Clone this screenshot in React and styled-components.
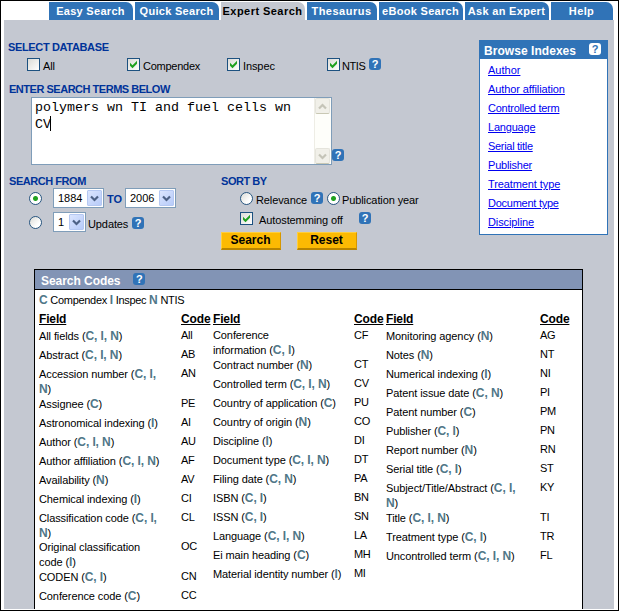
import React from "react";
import styled, { createGlobalStyle, css } from "styled-components";

const BLUE = "#3073b7";
const NAVY = "#003399";
const GREY = "#c4c8d1";

const Global = createGlobalStyle`
  * { box-sizing: border-box; }
  body { margin: 0; background: #fff; overflow: hidden; }
`;

const Frame = styled.div`
  width: 619px;
  height: 611px;
  border: 1px solid #000;
  padding: 1px 4px 1px 3px;
  background: #fff;
  color: #000;
  font: 11px/15px "Liberation Sans", Arial, sans-serif;
  letter-spacing: -0.1px;
  white-space: nowrap;
  display: flex;
  flex-direction: column;
  overflow: hidden;
`;

const Tabs = styled.nav`
  display: flex;
  gap: 2px;
  height: 18px;
  flex: none;
  padding-left: 45px;
`;

const Tab = styled.a`
  width: ${(p) => p.$w}px;
  height: 18px;
  line-height: 19px;
  text-align: center;
  font-size: 11px;
  font-weight: bold;
  letter-spacing: ${(p) => p.$ls ?? 0}px;
  padding-right: ${(p) => p.$pr ?? 1}px;
  border-top-right-radius: 7px;
  background: ${(p) => (p.$active ? GREY : BLUE)};
  color: ${(p) => (p.$active ? "#000" : "#fff")};
`;

const Content = styled.main`
  flex: 1;
  min-height: 0;
  width: 610px;
  background: ${GREY};
  padding-top: 20px;
`;

const Upper = styled.section`
  display: flex;
  height: 229px;
`;

const Form = styled.form`
  width: 475px;
`;

const Label = styled.h2`
  margin: 0;
  padding-left: ${(p) => p.$indent ?? 0}px;
  font-size: 11px;
  line-height: 14px;
  height: 14px;
  font-weight: bold;
  color: ${NAVY};
  letter-spacing: ${(p) => p.$ls ?? 0}px;
`;

const Databases = styled.div`
  display: flex;
  margin-top: 4px;
  padding-left: 23px;
  height: 14px;
`;

const Option = styled.label`
  display: flex;
  gap: ${(p) => p.$gap ?? 3}px;
  width: ${(p) => (p.$w ? p.$w + "px" : "auto")};
  height: 13px;
  letter-spacing: ${(p) => p.$ls ?? -0.1}px;
  line-height: 17px;
`;

const Box = styled.span`
  flex: none;
  width: 13px;
  height: 13px;
  border: 1px solid #1c5180;
  background: linear-gradient(135deg, #dcdcd7, #fff);
  svg { display: block; }
`;

const Dot = styled.span`
  flex: none;
  width: 13px;
  height: 13px;
  border: 1px solid #285680;
  border-radius: 50%;
  background: ${(p) =>
    p.$on
      ? "radial-gradient(circle, #21a121 0 2px, #fff 3px)"
      : "linear-gradient(135deg, #dcdcd7, #fff 70%)"};
`;

const HelpBadge = styled.span`
  flex: none;
  display: block;
  width: 12px;
  height: 12px;
  border-radius: 3px;
  background: ${(p) => (p.$light ? "#fff" : BLUE)};
  color: ${(p) => (p.$light ? BLUE : "#fff")};
  font: bold 11px/12px "Liberation Sans", Arial, sans-serif;
  text-align: center;
  letter-spacing: 0;
  margin: ${(p) => p.$m ?? "0"};
`;

const Terms = styled.div`
  display: flex;
  align-items: flex-end;
  margin: 1px 0 0 27px;
  height: 68px;
`;

const TextArea = styled.div`
  display: flex;
  width: 301px;
  height: 68px;
  border: 1px solid #7f9db9;
  background: #fff;
`;

const Typed = styled.div`
  flex: 1;
  padding: 2px 0 0 3px;
  font: 13.33px/16px "Liberation Mono", "Courier New", monospace;
  letter-spacing: 0;
`;

const Caret = styled.span`
  display: inline-block;
  width: 1px;
  height: 15px;
  margin-left: -1px;
  background: #000;
  vertical-align: -3px;
`;

const Scrollbar = styled.div`
  width: 17px;
  background: #fefefa;
  border-left: 1px solid #eeede5;
  display: flex;
  flex-direction: column;
  justify-content: space-between;
`;

const ScrollButton = styled.span`
  display: grid;
  place-items: center;
  width: 15px;
  height: 16px;
  border: 1px solid #e5e4dc;
  border-bottom-color: #c9c8b4;
  border-radius: 2px;
  background: #f1f0e9;
`;

const Criteria = styled.div`
  display: flex;
  margin-top: 9px;
`;

const Dates = styled.div`
  width: 217px;
`;

const Sorting = styled.div`
  flex: 1;
`;

const Row = styled.div`
  display: flex;
  align-items: ${(p) => p.$align ?? "flex-start"};
  height: ${(p) => p.$h}px;
  padding-left: ${(p) => p.$pl ?? 0}px;
  margin-top: ${(p) => p.$mt ?? 0}px;
`;

const Select = styled.span`
  display: flex;
  align-items: center;
  justify-content: space-between;
  width: ${(p) => p.$w}px;
  height: 20px;
  padding: 1px 1px 1px 4px;
  margin-left: ${(p) => p.$ml ?? 0}px;
  border: 1px solid #7f9db9;
  background: #fff;
  letter-spacing: 0;
`;

const SelectButton = styled.span`
  display: grid;
  place-items: center;
  width: 15px;
  height: 16px;
  border-radius: 1px;
  border: 1px solid #b5c8f2;
  background: linear-gradient(135deg, #dbe5fe, #b7cbf9);
`;

const Between = styled.b`
  color: ${NAVY};
  width: 21px;
  text-align: center;
  padding-top: 4px;
`;

const Caption = styled.span`
  width: 44px;
  margin-left: 2px;
  padding-top: 5px;
`;

const Action = styled.button`
  width: 60px;
  height: 18px;
  padding: 0 1px 1px 0;
  margin: 0 16px 0 0;
  border: 1px solid;
  border-color: #ffce3c #d69700 #b98500 #ffce3c;
  border-bottom-width: 2px;
  background: #fcba03;
  color: #000;
  font: bold 12px/15px "Liberation Sans", Arial, sans-serif;
`;

const Browse = styled.aside`
  width: 129px;
  height: 195px;
  border: 1px solid ${BLUE};
  background: #fff;
`;

const BrowseTitle = styled.h2`
  display: flex;
  justify-content: space-between;
  margin: 0;
  height: 18px;
  padding: 0 6px 0 4px;
  background: ${BLUE};
  color: #fff;
  font-size: 12px;
  line-height: 20px;
  letter-spacing: 0.05px;
`;

const Links = styled.div`
  display: flex;
  flex-direction: column;
  align-items: flex-start;
  padding: 2px 0 0 8px;
`;

const Link = styled.a`
  height: 19px;
  line-height: 19px;
  color: #0000f0;
  text-decoration: underline;
  letter-spacing: ${(p) => p.$ls ?? -0.1}px;
`;

const Codes = styled.section`
  width: 549px;
  height: 340px;
  margin-left: 30px;
  border: 1px solid #000;
  border-bottom: 0;
  background: #fff;
`;

const CodesTitle = styled.h2`
  display: flex;
  margin: 0;
  height: 20px;
  padding-left: 6px;
  border-bottom: 1px solid #000;
  background: #8294b5;
  color: #fff;
  font-size: 12px;
  line-height: 22px;
  letter-spacing: -0.05px;
`;

const Legend = styled.div`
  padding: 3px 0 0 4px;
  height: 20px;
  letter-spacing: -0.3px;
`;

const Mark = styled.b`
  color: #507788;
  font-size: 12px;
  line-height: 14px;
  letter-spacing: -0.1px;
`;

const Groups = styled.div`
  display: grid;
  grid-template-columns: 174px 173px 1fr;
  padding-left: 4px;
`;

const line = css`
  display: grid;
  grid-template-columns: ${(p) => p.$fw}px 1fr;
`;

const Heads = styled.div`
  ${line}
  height: 18px;
  font-size: 12px;
  line-height: 18px;
  font-weight: bold;
  text-decoration: underline;
  letter-spacing: -0.15px;
`;

const Entry = styled.div`
  ${line}
  height: ${(p) => p.$h}px;
`;

const Field = styled.span`
  padding-top: ${(p) => (p.$raised ? 0 : 1)}px;
`;

const FieldLine = styled.span`
  display: block;
  height: 15px;
  line-height: 15px;
`;

const Code = styled.span`
  letter-spacing: -0.3px;
`;

const Chevron = ({ color, up }) => (
  <svg width="9" height="7" viewBox="0 0 9 7">
    <path d={up ? "M1 5.5 4.5 2 8 5.5" : "M1 1.5 4.5 5 8 1.5"} fill="none" stroke={color} strokeWidth="2.2" />
  </svg>
);

const Check = ({ on }) => (
  <Box>
    {on && (
      <svg width="11" height="11" viewBox="0 0 11 11">
        <path d="M2 3.8v3L4.5 9.2 9 4.7v-3L4.5 6.2Z" fill="#21a121" />
      </svg>
    )}
  </Box>
);

const Help = (props) => <HelpBadge {...props}>?</HelpBadge>;

const tabs = [
  ["Easy Search", 84, 0.3],
  ["Quick Search", 84, 0.3],
  ["Expert Search", 84, 0.45],
  ["Thesaurus", 70, 0.5],
  ["eBook Search", 84, 0.3],
  ["Ask an Expert", 84, 0.3],
  ["Help", 62, 0.4],
];

const links = [
  ["Author", 0],
  ["Author affiliation", -0.1],
  ["Controlled term", -0.25],
  ["Language", -0.2],
  ["Serial title", -0.3],
  ["Publisher", -0.2],
  ["Treatment type", -0.1],
  ["Document type", -0.25],
  ["Discipline", -0.1],
];

/* Each row: [field lines, database lines, code, height]. The first database
   line follows the last field line; any further one starts a new line. */
const groups = [
  {
    fw: 142,
    rows: [
      ["All fields", "C, I, N", "All"],
      ["Abstract", "C, I, N", "AB"],
      ["Accession number", "C, I,\nN", "AN", 30],
      ["Assignee", "C", "PE"],
      ["Astronomical indexing", "I", "AI"],
      ["Author", "C, I, N", "AU"],
      ["Author affiliation", "C, I, N", "AF"],
      ["Availability", "N", "AV"],
      ["Chemical indexing", "I", "CI"],
      ["Classification code", "C, I,\nN", "CL", 29],
      ["Original classification\ncode", "I", "OC", 30],
      ["CODEN", "C, I", "CN"],
      ["Conference code", "C", "CC"],
    ],
  },
  {
    fw: 141,
    rows: [
      ["Conference\ninformation", "C, I", "CF", 29],
      ["Contract number", "N", "CT"],
      ["Controlled term", "C, I, N", "CV"],
      ["Country of application", "C", "PU"],
      ["Country of origin", "N", "CO"],
      ["Discipline", "I", "DI"],
      ["Document type", "C, I, N", "DT"],
      ["Filing date", "C, N", "PA"],
      ["ISBN", "C, I", "BN"],
      ["ISSN", "C, I", "SN"],
      ["Language", "C, I, N", "LA"],
      ["Ei main heading", "C", "MH"],
      ["Material identity number", "I", "MI"],
    ],
  },
  {
    fw: 154,
    rows: [
      ["Monitoring agency", "N", "AG"],
      ["Notes", "N", "NT"],
      ["Numerical indexing", "I", "NI"],
      ["Patent issue date", "C, N", "PI"],
      ["Patent number", "C", "PM"],
      ["Publisher", "C, I", "PN"],
      ["Report number", "N", "RN"],
      ["Serial title", "C, I", "ST"],
      ["Subject/Title/Abstract", "C, I,\nN", "KY", 30],
      ["Title", "C, I, N", "TI"],
      ["Treatment type", "C, I", "TR"],
      ["Uncontrolled term", "C, I, N", "FL"],
    ],
  },
];

function FieldName({ name, dbs, raised }) {
  const names = name.split("\n");
  const last = names.pop();
  const [first, rest] = dbs.split("\n");
  return (
    <Field $raised={raised}>
      {names.map((n) => <FieldLine key={n}>{n}</FieldLine>)}
      <FieldLine>
        {last} (<Mark>{first}</Mark>{!rest && ")"}
      </FieldLine>
      {rest && <FieldLine><Mark>{rest}</Mark>)</FieldLine>}
    </Field>
  );
}

export default function App() {
  return (
    <Frame>
      <Global />
      <Tabs>
        {tabs.map(([name, w, ls]) => (
          <Tab key={name} $w={w} $ls={ls} $active={name === "Expert Search"}>
            {name}
          </Tab>
        ))}
      </Tabs>
      <Content>
        <Upper>
          <Form>
            <Label $indent={4} $ls={-0.35}>SELECT DATABASE</Label>
            <Databases>
              <Option $w={100}><Check />All</Option>
              <Option $w={100} $ls={-0.25}><Check on />Compendex</Option>
              <Option $w={100}><Check on />Inspec</Option>
              <Option $w={42} $gap={2} $ls={-0.4}><Check on />NTIS</Option>
              <Help />
            </Databases>
            <Row $h={24} $pl={5} $align="flex-end">
              <Label $ls={-0.48}>ENTER SEARCH TERMS BELOW</Label>
            </Row>
            <Terms>
              <TextArea>
                <Typed>
                  polymers wn TI and fuel cells wn
                  <br />
                  CV<Caret />
                </Typed>
                <Scrollbar>
                  <ScrollButton><Chevron up color="#c5c4b8" /></ScrollButton>
                  <ScrollButton><Chevron color="#c5c4b8" /></ScrollButton>
                </Scrollbar>
              </TextArea>
              <Help $m="0 0 4px 0" />
            </Terms>
            <Criteria>
              <Dates>
                <Label $indent={5} $ls={-0.45}>SEARCH FROM</Label>
                <Row $h={24} $pl={25}>
                  <Row $h={20} $align="center"><Dot $on /></Row>
                  <Select $w={51} $ml={11}>1884<SelectButton><Chevron color="#4d6185" /></SelectButton></Select>
                  <Between>TO</Between>
                  <Select $w={51}>2006<SelectButton><Chevron color="#4d6185" /></SelectButton></Select>
                </Row>
                <Row $h={20} $pl={25}>
                  <Row $h={20} $align="center"><Dot /></Row>
                  <Select $w={33} $ml={11}>1<SelectButton><Chevron color="#4d6185" /></SelectButton></Select>
                  <Caption>Updates</Caption>
                  <Help $m="5px 0 0 0" />
                </Row>
              </Dates>
              <Sorting>
                <Label $ls={-0.45}>SORT BY</Label>
                <Row $h={20} $mt={4} $pl={19}>
                  <Option $w={71}><Dot />Relevance</Option>
                  <Help />
                  <Row $h={13} $pl={4}>
                    <Option $gap={2}><Dot $on />Publication year</Option>
                  </Row>
                </Row>
                <Row $h={20} $pl={19}>
                  <Option $w={119} $gap={6}><Check on />Autostemming off</Option>
                  <Help />
                </Row>
                <Row $h={18}>
                  <Action type="button">Search</Action>
                  <Action type="button">Reset</Action>
                </Row>
              </Sorting>
            </Criteria>
          </Form>
          <Browse>
            <BrowseTitle>Browse Indexes<Help $light $m="2px 0 0 0" /></BrowseTitle>
            <Links>
              {links.map(([name, ls]) => <Link key={name} $ls={ls}>{name}</Link>)}
            </Links>
          </Browse>
        </Upper>
        <Codes>
          <CodesTitle>Search Codes<Help $m="3px 0 0 13px" /></CodesTitle>
          <Legend>
            <Mark>C</Mark> Compendex <Mark>I</Mark> Inspec <Mark>N</Mark> NTIS
          </Legend>
          <Groups>
            {groups.map((g, gi) => (
              <div key={gi}>
                <Heads $fw={g.fw}><span>Field</span><span>Code</span></Heads>
                {g.rows.map(([name, dbs, code, h = 19]) => (
                  <Entry key={code} $fw={g.fw} $h={h}>
                    <FieldName name={name} dbs={dbs} raised={code === "CF"} />
                    <Code>{code}</Code>
                  </Entry>
                ))}
              </div>
            ))}
          </Groups>
        </Codes>
      </Content>
    </Frame>
  );
}
